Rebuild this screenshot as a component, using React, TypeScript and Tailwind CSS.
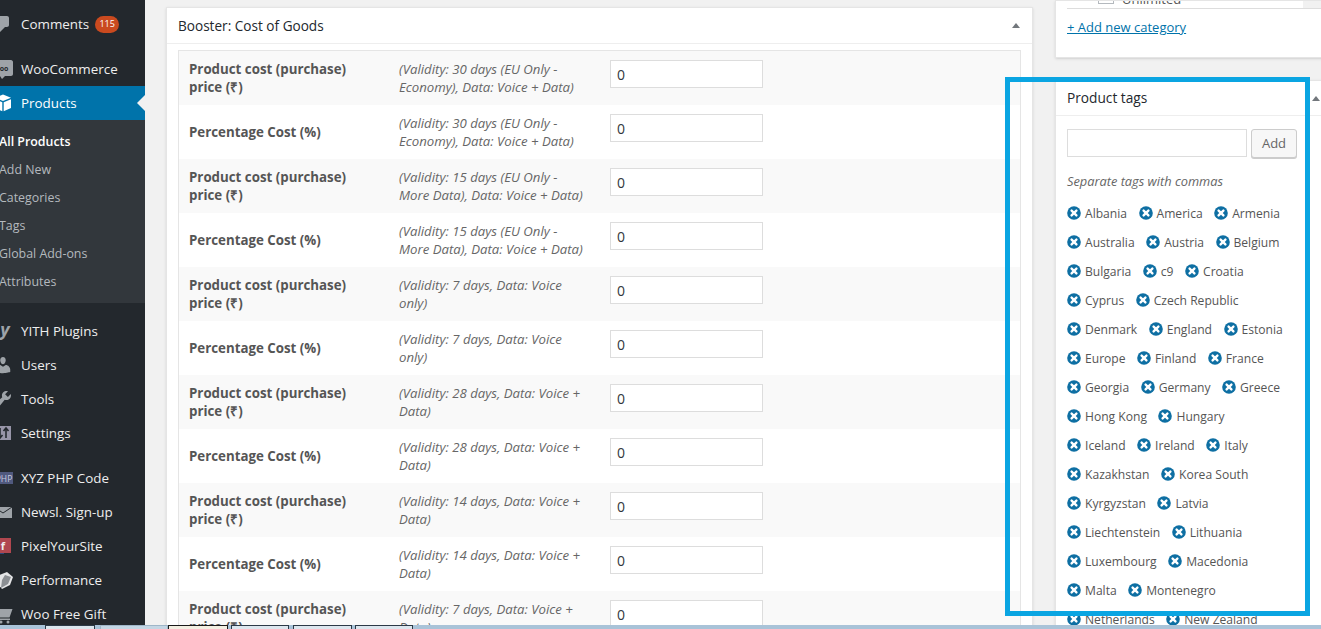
import type { ReactNode } from "react";

const GREY = "#9ea3a8";

function Svg({ children }: { children: ReactNode }) {
  return (
    <svg viewBox="0 0 20 20" width="20" height="20" fill={GREY}>
      {children}
    </svg>
  );
}

const icons: Record<string, ReactNode> = {
  comments: (
    <Svg>
      <path d="M5 2h9c1.1 0 2 .9 2 2v7c0 1.1-.9 2-2 2h-2l-5 5v-5H5c-1.1 0-2-.9-2-2V4c0-1.1.9-2 2-2z" />
    </Svg>
  ),
  woo: (
    <Svg>
      <path d="M2 1h16c1 0 2 1 2 2v12c0 1-1 2-2 2h-6l-3 3-2-3H2z" />
      <text x="11" y="11.5" fontSize="7" fontWeight="700" fill="#23282d" textAnchor="middle" fontFamily="'Open Sans', sans-serif">
        oo
      </text>
    </Svg>
  ),
  products: (
    <svg viewBox="0 0 20 20" width="20" height="20" fill="#fff">
      <path d="M10 1.5l8 3.2-8 3.3-8-3.3z" />
      <path d="M9.3 9.3v8.9L2 15V6.2z" />
      <path d="M10.7 9.3l7.3-3.1V15l-7.3 3.2z" />
    </svg>
  ),
  yith: (
    <Svg>
      <text x="12" y="15" fontSize="18" fontWeight="700" fontStyle="italic" textAnchor="middle" fontFamily="'Open Sans', sans-serif">
        y
      </text>
    </Svg>
  ),
  users: (
    <Svg>
      <path d="M10 9.25c-2.27 0-2.73-3.44-2.73-3.44C7 4.02 7.82 2 9.97 2c2.16 0 2.98 2.02 2.71 3.81 0 0-.41 3.44-2.68 3.44zm0 2.57L12.72 10c2.39 0 4.52 2.33 4.52 4.53v2.49s-3.65 1.13-7.24 1.13c-3.65 0-7.24-1.13-7.24-1.13v-2.49c0-2.25 1.94-4.48 4.47-4.48z" />
    </Svg>
  ),
  tools: (
    <Svg>
      <path d="M16.68 9.77c-1.34 1.34-3.3 1.67-4.95.99l-5.41 6.52c-.99.99-2.59.99-3.58 0s-.99-2.59 0-3.57l6.52-5.42c-.68-1.65-.35-3.61.99-4.95 1.28-1.28 3.12-1.62 4.72-1.06l-2.89 2.89 2.82 2.82 2.86-2.87c.53 1.58.18 3.39-1.08 4.65z" />
    </Svg>
  ),
  settings: (
    <svg viewBox="0 0 20 20" width="20" height="20" fill="#9795a8">
      <path d="M2 3h16v14H2z" />
      <path d="M7 5v10M4.5 12l2.5 3 2.5-3M13 5v10M10.5 8l2.5-3 2.5 3" stroke="#23282d" strokeWidth="1.6" fill="none" />
    </svg>
  ),
  xyz: (
    <svg viewBox="0 0 20 20" width="20" height="20">
      <rect x="1" y="4" width="19" height="12" fill="#50597e" />
      <text x="11" y="13.5" fontSize="8.5" fill="#c9cde0" textAnchor="middle" fontFamily="'Open Sans', sans-serif">
        PHP
      </text>
    </svg>
  ),
  mail: (
    <Svg>
      <path d="M1 5h18v11H1z" />
      <path d="M1 5l9 6 9-6" fill="none" stroke="#23282d" strokeWidth="1" />
    </Svg>
  ),
  pixel: (
    <svg viewBox="0 0 20 20" width="20" height="20">
      <rect x="1" y="2" width="10" height="16" fill="#2e4a7d" />
      <rect x="3" y="2" width="15" height="15" fill="#b0474f" />
      <text x="10" y="14" fontSize="11" fontWeight="700" fill="#eee" textAnchor="middle" fontFamily="'Open Sans', sans-serif">
        f
      </text>
    </svg>
  ),
  performance: (
    <Svg>
      <path d="M4 6l10-4 6 5-3 8-8 4-5-6z" fill="#e4e5e6" />
      <path d="M12 5l6 2-3 7-7 4 1-8z" fill="#8b8f93" />
    </Svg>
  ),
  cart: (
    <Svg>
      <path d="M1 5h18.5l-3 8.5H6L5 10H1z" />
      <path d="M6 14.5h11V16H6z" />
      <circle cx="8" cy="18" r="1.5" />
      <circle cx="15" cy="18" r="1.5" />
    </Svg>
  ),
};

function MenuItem({ icon, label, badge, active }: { icon: string; label: string; badge?: string; active?: boolean }) {
  return (
    <div className={`relative flex h-[34px] items-center text-[13.4px] ${active ? "bg-[#0073aa] text-white" : "text-[#eeeeee]"}`}>
      <div className="flex w-[36px] shrink-0 justify-center">{icons[icon]}</div>
      <span className="whitespace-nowrap">{label}</span>
      {badge && (
        <span className="ml-[6px] flex h-[17px] w-[24px] items-center justify-center rounded-full bg-[#ca4a1f] text-[9px] text-white">{badge}</span>
      )}
      {active && <span className="absolute top-[9px] right-0 h-0 w-0 border-y-[8px] border-r-[8px] border-y-transparent border-r-[#f1f1f1]" />}
    </div>
  );
}

function Sidebar() {
  return (
    <aside className="h-full w-[145px] shrink-0 overflow-hidden bg-[#23282d]">
      <div className="ml-[-15px] w-[160px] pt-[7px]">
        <MenuItem icon="comments" label="Comments" badge="115" />
        <div className="h-[11px]" />
        <MenuItem icon="woo" label="WooCommerce" />
        <MenuItem icon="products" label="Products" active />
        <div className="bg-[#32373c] pt-[8px] pb-[7px] text-[12.4px] text-[#b4b9be]">
          {["All Products", "Add New", "Categories", "Tags", "Global Add-ons", "Attributes"].map((s, i) => (
            <div key={s} className={`flex h-[28px] items-center pl-[14px] ${i === 0 ? "font-semibold text-white" : ""}`}>
              {s}
            </div>
          ))}
        </div>
        <div className="h-[11px]" />
        <MenuItem icon="yith" label="YITH Plugins" />
        <MenuItem icon="users" label="Users" />
        <MenuItem icon="tools" label="Tools" />
        <MenuItem icon="settings" label="Settings" />
        <div className="h-[11px]" />
        <MenuItem icon="xyz" label="XYZ PHP Code" />
        <MenuItem icon="mail" label="Newsl. Sign-up" />
        <MenuItem icon="pixel" label="PixelYourSite" />
        <MenuItem icon="performance" label="Performance" />
        <MenuItem icon="cart" label="Woo Free Gift" />
      </div>
    </aside>
  );
}

const costRows = [
  "(Validity: 30 days (EU Only - Economy), Data: Voice + Data)",
  "(Validity: 15 days (EU Only - More Data), Data: Voice + Data)",
  "(Validity: 7 days, Data: Voice only)",
  "(Validity: 28 days, Data: Voice + Data)",
  "(Validity: 14 days, Data: Voice + Data)",
  "(Validity: 7 days, Data: Voice + Data)",
];

function CostRow({ label, desc, shaded }: { label: string; desc: string; shaded: boolean }) {
  return (
    <div className={`flex h-[54px] shrink-0 items-center pl-[10px] ${shaded ? "bg-[#f9f9f9]" : "bg-white"}`}>
      <div className="w-[210px] shrink-0 pr-[40px] text-[13.3px] leading-[18px] font-bold text-[#555555]">{label}</div>
      <div className="w-[211px] shrink-0 pr-[26px] text-[13.2px] leading-[18px] text-[#666666] italic">{desc}</div>
      <div className="mt-[-8px] flex h-[28px] w-[153px] items-center border border-[#dddddd] bg-white px-[6px] text-[14px] text-[#32373c]">0</div>
    </div>
  );
}

function Triangle() {
  return <span className="h-0 w-0 border-x-[4px] border-b-[5px] border-x-transparent border-b-[#72777c]" />;
}

function CostBox() {
  return (
    <section className="mt-[7px] h-[700px] w-[867px] shrink-0 border border-[#e5e5e5] bg-white shadow-sm">
      <div className="flex h-[36px] items-center justify-between border-b border-[#eeeeee] pr-[12px] pl-[11px]">
        <h2 className="pt-[2px] text-[13.6px] font-medium text-[#23282d]">Booster: Cost of Goods</h2>
        <Triangle />
      </div>
      <div className="mx-[11px] mt-[6px] border border-[#e5e5e5]">
        {costRows.flatMap((d, i) => [
          <CostRow key={`c${i}`} label="Product cost (purchase) price (₹)" desc={d} shaded />,
          i < 5 ? <CostRow key={`p${i}`} label="Percentage Cost (%)" desc={d} shaded={false} /> : null,
        ])}
      </div>
    </section>
  );
}

const tags = [
  "Albania", "America", "Armenia", "Australia", "Austria", "Belgium", "Bulgaria", "c9", "Croatia",
  "Cyprus", "Czech Republic", "Denmark", "England", "Estonia", "Europe", "Finland", "France",
  "Georgia", "Germany", "Greece", "Hong Kong", "Hungary", "Iceland", "Ireland", "Italy",
  "Kazakhstan", "Korea South", "Kyrgyzstan", "Latvia", "Liechtenstein", "Lithuania",
  "Luxembourg", "Macedonia", "Malta", "Montenegro", "Netherlands", "New Zealand",
];

function Tag({ name }: { name: string }) {
  return (
    <span className="mr-[11.5px] flex h-[29px] items-center text-[12.1px] whitespace-nowrap text-[#555555]">
      <svg viewBox="0 0 14 14" width="14" height="14" className="mr-[4px]">
        <circle cx="7" cy="7" r="6.8" fill="#0e6fa3" />
        <path d="M4.6 4.6l4.8 4.8M9.4 4.6l-4.8 4.8" stroke="#fff" strokeWidth="2.4" strokeLinecap="round" />
      </svg>
      <span className="pt-[3px]">{name}</span>
    </span>
  );
}

function RightColumn() {
  return (
    <div className="w-[280px] shrink-0">
      <div className="h-[58px] border border-[#e5e5e5] bg-white shadow-sm">
        <div className="ml-[11px] flex h-[8px] items-end overflow-hidden border-b border-[#dddddd]">
          <div className="mb-[4px] ml-[31px] h-[16px] w-[16px] shrink-0 border border-[#b4b9be] bg-white" />
          <span className="mb-[-1px] ml-[8px] text-[13px] text-[#555555]">Unlimited</span>
          <div className="ml-auto h-full w-[31px] bg-[#f1f1f1]" />
        </div>
        <a className="mt-[9px] ml-[11px] block text-[13px] leading-[18px] text-[#0073aa] underline">+ Add new category</a>
      </div>
      <div className="mt-[22px] h-[600px] border border-[#e5e5e5] bg-white shadow-sm">
        <div className="flex h-[35px] items-center justify-between border-b border-[#eeeeee] pr-[14px] pl-[11px]">
          <h2 className="text-[13.7px] font-medium text-[#23282d]">Product tags</h2>
          <Triangle />
        </div>
        <div className="flex gap-[4px] pt-[13px] pl-[11px]">
          <div className="h-[28px] w-[180px] border border-[#dddddd] bg-white" />
          <div className="flex h-[29px] w-[46px] items-center justify-center rounded-[3px] border border-[#cccccc] bg-[#f7f7f7] text-[13px] text-[#666666] shadow-[0_1px_0_#cccccc]">Add</div>
        </div>
        <p className="mt-[14px] ml-[11px] text-[12.8px] leading-[18px] text-[#666666] italic">Separate tags with commas</p>
        <div className="mt-[8px] ml-[11px] flex w-[232px] flex-wrap">
          {tags.map((t) => (
            <Tag key={t} name={t} />
          ))}
        </div>
      </div>
    </div>
  );
}

const taskButtons = [
  { cls: "ml-[45px] w-[50px] border-[#2c3a47] bg-[#dce6ee]" },
  { cls: "ml-[5px] w-[68px] border-[#9fb6c8] bg-[#c4d6e4]" },
  { cls: "w-[60px] border-[#1a1a1a] bg-[#f3efe2]" },
  { cls: "ml-[3px] w-[58px] border-[#2c3a47] bg-[#dce6ee]" },
  { cls: "ml-[4px] w-[59px] border-[#2c3a47] bg-[#dce6ee]" },
  { cls: "ml-[3px] w-[58px] border-[#2c3a47] bg-[#dce6ee]" },
];

function Taskbar() {
  return (
    <div className="absolute inset-x-0 bottom-0 flex h-[4px] bg-[#a9c3d8]">
      {taskButtons.map((b, i) => (
        <div key={i} className={`border-x border-t ${b.cls}`} />
      ))}
    </div>
  );
}

export default function App() {
  return (
    <div className="relative flex h-[629px] w-[1321px] overflow-hidden bg-[#f1f1f1] font-['Open_Sans',sans-serif]">
      <Sidebar />
      <main className="flex items-start gap-[22px] pl-[21px]">
        <CostBox />
        <RightColumn />
      </main>
      {/* highlight frame drawn over the screenshot */}
      <div className="absolute top-[77px] left-[1005px] h-[539px] w-[305px] border-[5px] border-[#0aa5e2]" />
      <Taskbar />
    </div>
  );
}
